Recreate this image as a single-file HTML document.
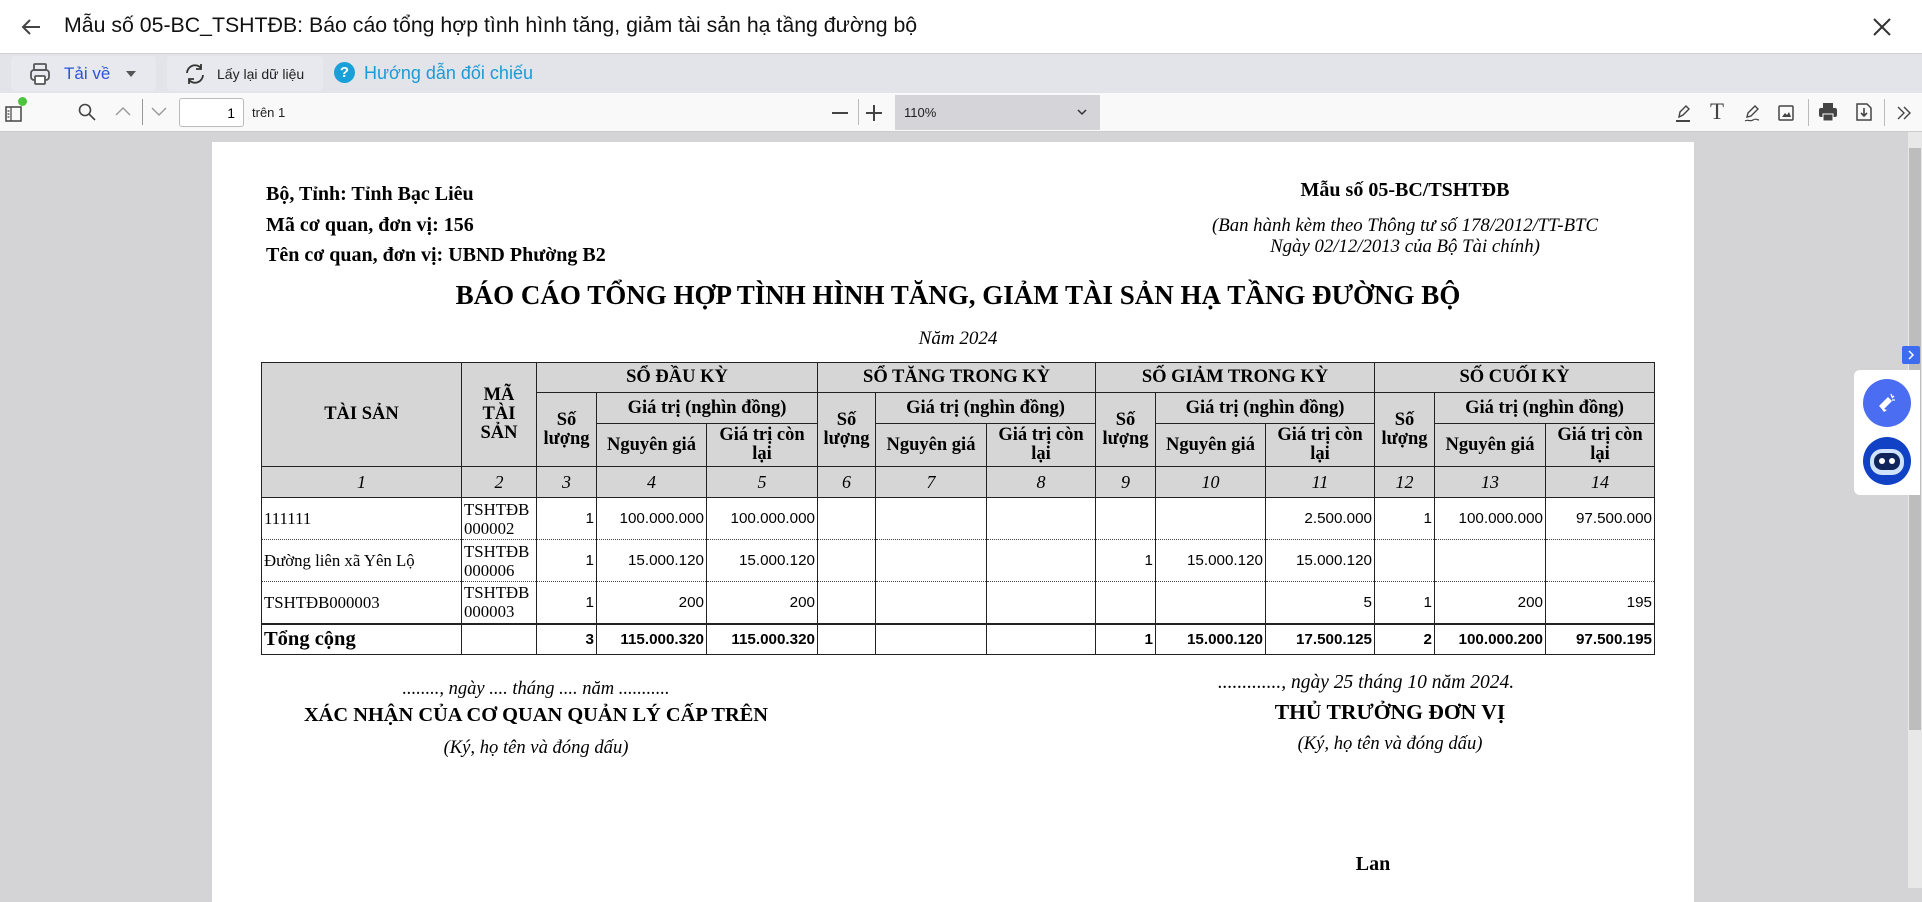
<!DOCTYPE html>
<html><head><meta charset="utf-8">
<style>
*{margin:0;padding:0;box-sizing:border-box}
body{width:1922px;height:888px;overflow:hidden;background:#d4d4d7;font-family:"Liberation Sans",sans-serif;position:relative}
.abs{position:absolute}
#top{left:0;top:0;width:1922px;height:54px;background:#fff;border-bottom:1px solid #d0d0d0}
#top .t{left:64px;top:13px;font-size:21.3px;color:#111}
#bar2{left:0;top:54px;width:1922px;height:39px;background:#e2e4ea}
.btn{background:#e8e9ee;height:35px;top:2px;border-radius:4px}
#pdfbar{left:0;top:93px;width:1922px;height:39px;background:#f9f9fa;border-bottom:1px solid #ccc}
#page{left:212px;top:142px;width:1482px;height:760px;background:#fff}
.serif{font-family:"Liberation Serif",serif;color:#000}
table{border-collapse:collapse;position:absolute;left:261px;top:362px;table-layout:fixed}
td{border:1px solid #222;font-family:"Liberation Serif",serif;font-size:18.5px;text-align:center;line-height:19px;padding:0 2px;overflow:hidden}
.h td{background:#d6d6d6;font-weight:bold}
.idx td{background:#d6d6d6;font-style:italic;height:31px;font-size:18px}
.d td{height:42px;font-family:"Liberation Sans",sans-serif;font-size:15.2px;text-align:right;border-top:1px dotted #444;border-bottom:1px dotted #444}
.d td.l{text-align:left;font-family:"Liberation Serif",serif;font-size:16.8px}
.tot td{height:31px;font-family:"Liberation Sans",sans-serif;font-weight:bold;font-size:15.2px;text-align:right;border-top:2px solid #222}
</style></head><body>
<div id="top" class="abs">
 <svg class="abs" style="left:20px;top:17px" width="22" height="20" viewBox="0 0 22 20"><path d="M20 10H3M10 3L3 10l7 7" stroke="#444" stroke-width="2" fill="none"/></svg>
 <div class="abs t">Mẫu số 05-BC_TSHTĐB: Báo cáo tổng hợp tình hình tăng, giảm tài sản hạ tầng đường bộ</div>
 <svg class="abs" style="left:1872px;top:17px" width="20" height="20" viewBox="0 0 20 20"><path d="M2 2L18 18M18 2L2 18" stroke="#333" stroke-width="2"/></svg>
</div>
<div id="bar2" class="abs">
 <div class="abs btn" style="left:11px;width:145px"></div>
 <div class="abs btn" style="left:167px;width:156px"></div>
 <svg class="abs" style="left:29px;top:8px" width="22" height="24" viewBox="0 0 22 24"><rect x="5" y="2" width="12" height="6" rx="1" fill="none" stroke="#555" stroke-width="1.8"/><rect x="2" y="8" width="18" height="10" rx="3" fill="none" stroke="#555" stroke-width="1.8"/><rect x="6" y="14" width="10" height="8" rx="1" fill="#fff" stroke="#555" stroke-width="1.8"/></svg>
 <div class="abs" style="left:64px;top:10px;font-size:17px;color:#2a55d8">Tải về</div>
 <div class="abs" style="left:126px;top:17px;border-left:5px solid transparent;border-right:5px solid transparent;border-top:6px solid #555"></div>
 <svg class="abs" style="left:183px;top:8px" width="24" height="24" viewBox="0 0 24 24"><path d="M4 11a8 8 0 0 1 14-5M20 13a8 8 0 0 1-14 5" stroke="#333" stroke-width="1.8" fill="none"/><path d="M18 2v5h-5M6 22v-5h5" stroke="#333" stroke-width="1.8" fill="none"/></svg>
 <div class="abs" style="left:217px;top:12px;font-size:14px;color:#222">Lấy lại dữ liệu</div>
 <div class="abs" style="left:334px;top:8px;width:21px;height:21px;border-radius:50%;background:#1aa0d8;color:#fff;font-weight:bold;font-size:15px;text-align:center;line-height:21px">?</div>
 <div class="abs" style="left:364px;top:9px;font-size:18px;color:#1a9bd7">Hướng dẫn đối chiếu</div>
</div>
<div id="pdfbar" class="abs">
 <svg class="abs" style="left:5px;top:12px" width="18" height="18" viewBox="0 0 18 18"><rect x="1" y="2" width="15" height="14" fill="none" stroke="#444" stroke-width="1.5"/><path d="M6 2v14M2.5 6h2M2.5 9h2M2.5 12h2" stroke="#444" stroke-width="1.2"/></svg>
 <div class="abs" style="left:18px;top:4px;width:9px;height:9px;border-radius:50%;background:#4cc43e"></div>
 <svg class="abs" style="left:78px;top:10px" width="18" height="18" viewBox="0 0 18 18"><circle cx="7" cy="7" r="5.5" fill="none" stroke="#444" stroke-width="1.6"/><path d="M11 11l6 6" stroke="#444" stroke-width="1.6"/></svg>
 <svg class="abs" style="left:115px;top:13px" width="16" height="10" viewBox="0 0 16 10"><path d="M1 9l7-7 7 7" stroke="#999" stroke-width="1.4" fill="none"/></svg>
 <div class="abs" style="left:142px;top:6px;width:1px;height:26px;background:#999"></div>
 <svg class="abs" style="left:151px;top:14px" width="16" height="10" viewBox="0 0 16 10"><path d="M1 1l7 7 7-7" stroke="#999" stroke-width="1.4" fill="none"/></svg>
 <div class="abs" style="left:179px;top:5px;width:65px;height:29px;background:#fff;border:1px solid #bbb;border-radius:3px;font-size:14px;text-align:right;padding:6px 8px 0 0">1</div>
 <div class="abs" style="left:252px;top:12px;font-size:13px;color:#222">trên 1</div>
 <div class="abs" style="left:832px;top:19px;width:16px;height:1.5px;background:#444"></div>
 <div class="abs" style="left:858px;top:6px;width:1px;height:26px;background:#bbb"></div>
 <div class="abs" style="left:866px;top:19px;width:16px;height:1.5px;background:#444"></div>
 <div class="abs" style="left:873px;top:12px;width:1.5px;height:16px;background:#444"></div>
 <div class="abs" style="left:895px;top:2px;width:205px;height:35px;background:#d5d5d9"></div>
 <div class="abs" style="left:904px;top:12px;font-size:13px;color:#222">110%</div>
 <svg class="abs" style="left:1077px;top:16px" width="10" height="8" viewBox="0 0 10 8"><path d="M1 1l4 4 4-4" stroke="#333" stroke-width="1.5" fill="none"/></svg>
 <svg class="abs" style="left:1673px;top:10px" width="20" height="20" viewBox="0 0 20 20"><path d="M6 14l1-5 6-6 3 3-6 6z" fill="none" stroke="#444" stroke-width="1.4"/><path d="M3 18h14" stroke="#444" stroke-width="2"/></svg>
 <div class="abs serif" style="left:1710px;top:6px;font-size:23px;color:#444">T</div>
 <svg class="abs" style="left:1742px;top:10px" width="20" height="20" viewBox="0 0 20 20"><path d="M5 14l1-4 7-7 3 3-7 7z" fill="none" stroke="#444" stroke-width="1.4"/><path d="M3 18c3-2 5 1 8-1s4 0 6 0" stroke="#444" stroke-width="1.2" fill="none"/></svg>
 <svg class="abs" style="left:1777px;top:10px" width="18" height="20" viewBox="0 0 18 20"><rect x="2" y="3" width="14" height="14" rx="1" fill="none" stroke="#444" stroke-width="1.5"/><path d="M5 14l3-4 2 2 2-3 2 5z" fill="#444"/></svg>
 <div class="abs" style="left:1808px;top:6px;width:1px;height:27px;background:#bbb"></div>
 <svg class="abs" style="left:1818px;top:9px" width="20" height="20" viewBox="0 0 20 20"><rect x="5" y="1" width="10" height="5" fill="#444"/><rect x="1" y="6" width="18" height="9" rx="2" fill="#444"/><rect x="5" y="12" width="10" height="7" fill="#444" stroke="#fff" stroke-width="1"/></svg>
 <svg class="abs" style="left:1854px;top:9px" width="20" height="20" viewBox="0 0 20 20"><path d="M3 2h10l4 4v12H3z" fill="none" stroke="#444" stroke-width="1.5"/><path d="M10 6v8M7 11l3 3 3-3" stroke="#444" stroke-width="1.6" fill="none"/></svg>
 <div class="abs" style="left:1884px;top:6px;width:1px;height:27px;background:#bbb"></div>
 <svg class="abs" style="left:1896px;top:12px" width="16" height="16" viewBox="0 0 16 16"><path d="M2 2l6 6-6 6M8 2l6 6-6 6" stroke="#444" stroke-width="1.4" fill="none"/></svg>
</div>
<div class="abs" style="left:1908px;top:132px;width:14px;height:756px;background:#e8e8e8"></div>
<div class="abs" style="left:1909px;top:148px;width:12px;height:582px;background:#bdbdbd"></div>
<div id="page" class="abs"></div>
<div class="abs serif" style="left:266px;top:179px;font-size:20px;font-weight:bold;line-height:30.5px">Bộ, Tỉnh: Tỉnh Bạc Liêu<br>Mã cơ quan, đơn vị: 156<br>Tên cơ quan, đơn vị: UBND Phường B2</div>
<div class="abs serif" style="left:1205px;width:400px;top:179px;font-size:20px;font-weight:bold;text-align:center">Mẫu số 05-BC/TSHTĐB</div>
<div class="abs serif" style="left:1155px;width:500px;top:215px;font-size:18.8px;font-style:italic;text-align:center;line-height:21px">(Ban hành kèm theo Thông tư số 178/2012/TT-BTC<br>Ngày 02/12/2013 của Bộ Tài chính)</div>
<div class="abs serif" style="left:262px;width:1392px;top:280px;font-size:27px;font-weight:bold;text-align:center">BÁO CÁO TỔNG HỢP TÌNH HÌNH TĂNG, GIẢM TÀI SẢN HẠ TẦNG ĐƯỜNG BỘ</div>
<div class="abs serif" style="left:858px;width:200px;top:328px;font-size:19px;font-style:italic;text-align:center">Năm 2024</div>
<table>
<colgroup><col style="width:200px"><col style="width:75px"><col style="width:60px"><col style="width:110px"><col style="width:111px"><col style="width:58px"><col style="width:111px"><col style="width:109px"><col style="width:60px"><col style="width:110px"><col style="width:109px"><col style="width:60px"><col style="width:111px"><col style="width:109px"></colgroup>
<tr class="h" style="height:30px"><td rowspan="3">TÀI SẢN</td><td rowspan="3">MÃ<br>TÀI<br>SẢN</td><td colspan="3">SỔ ĐẦU KỲ</td><td colspan="3">SỔ TĂNG TRONG KỲ</td><td colspan="3">SỐ GIẢM TRONG KỲ</td><td colspan="3">SỐ CUỐI KỲ</td></tr>
<tr class="h" style="height:31px"><td rowspan="2">Số<br>lượng</td><td colspan="2">Giá trị (nghìn đồng)</td><td rowspan="2">Số<br>lượng</td><td colspan="2">Giá trị (nghìn đồng)</td><td rowspan="2">Số<br>lượng</td><td colspan="2">Giá trị (nghìn đồng)</td><td rowspan="2">Số<br>lượng</td><td colspan="2">Giá trị (nghìn đồng)</td></tr>
<tr class="h" style="height:43px"><td>Nguyên giá</td><td>Giá trị còn<br>lại</td><td>Nguyên giá</td><td>Giá trị còn<br>lại</td><td>Nguyên giá</td><td>Giá trị còn<br>lại</td><td>Nguyên giá</td><td>Giá trị còn<br>lại</td></tr>
<tr class="idx"><td>1</td><td>2</td><td>3</td><td>4</td><td>5</td><td>6</td><td>7</td><td>8</td><td>9</td><td>10</td><td>11</td><td>12</td><td>13</td><td>14</td></tr>
<tr class="d"><td class="l">111111</td><td class="l">TSHTĐB<br>000002</td><td>1</td><td>100.000.000</td><td>100.000.000</td><td></td><td></td><td></td><td></td><td></td><td>2.500.000</td><td>1</td><td>100.000.000</td><td>97.500.000</td></tr>
<tr class="d"><td class="l">Đường liên xã Yên Lộ</td><td class="l">TSHTĐB<br>000006</td><td>1</td><td>15.000.120</td><td>15.000.120</td><td></td><td></td><td></td><td>1</td><td>15.000.120</td><td>15.000.120</td><td></td><td></td><td></td></tr>
<tr class="d"><td class="l">TSHTĐB000003</td><td class="l">TSHTĐB<br>000003</td><td>1</td><td>200</td><td>200</td><td></td><td></td><td></td><td></td><td></td><td>5</td><td>1</td><td>200</td><td>195</td></tr>
<tr class="tot"><td style="text-align:left;font-family:'Liberation Serif',serif;font-size:20.5px">Tổng cộng</td><td></td><td>3</td><td>115.000.320</td><td>115.000.320</td><td></td><td></td><td></td><td>1</td><td>15.000.120</td><td>17.500.125</td><td>2</td><td>100.000.200</td><td>97.500.195</td></tr>
</table>
<div class="abs serif" style="left:236px;width:600px;top:679px;font-size:18.5px;font-style:italic;text-align:center">........, ngày .... tháng .... năm ...........</div>
<div class="abs serif" style="left:186px;width:700px;top:704px;font-size:20.4px;font-weight:bold;text-align:center">XÁC NHẬN CỦA CƠ QUAN QUẢN LÝ CẤP TRÊN</div>
<div class="abs serif" style="left:236px;width:600px;top:737px;font-size:18.6px;font-style:italic;text-align:center">(Ký, họ tên và đóng dấu)</div>
<div class="abs serif" style="left:1066px;width:600px;top:672px;font-size:19.5px;font-style:italic;text-align:center">............., ngày 25 tháng 10 năm 2024.</div>
<div class="abs serif" style="left:1090px;width:600px;top:700px;font-size:21.6px;font-weight:bold;text-align:center">THỦ TRƯỞNG ĐƠN VỊ</div>
<div class="abs serif" style="left:1090px;width:600px;top:733px;font-size:18.6px;font-style:italic;text-align:center">(Ký, họ tên và đóng dấu)</div>
<div class="abs serif" style="left:1273px;width:200px;top:853px;font-size:20px;font-weight:bold;text-align:center">Lan</div>
<div class="abs" style="left:1902px;top:346px;width:18px;height:18px;background:#3d6cf0;border-radius:2px"></div>
<svg class="abs" style="left:1906px;top:350px" width="10" height="10" viewBox="0 0 10 10"><path d="M3 1l4 4-4 4" stroke="#fff" stroke-width="1.5" fill="none"/></svg>
<div class="abs" style="left:1854px;top:370px;width:66px;height:125px;background:#fff;border-radius:6px 0 0 6px"></div>
<div class="abs" style="left:1863px;top:379px;width:48px;height:48px;border-radius:50%;background:#4a6df2"></div>
<svg class="abs" style="left:1875px;top:391px" width="24" height="24" viewBox="0 0 24 24"><path d="M4 15l9-9 4 4-9 9z" fill="#fff"/><path d="M6 17l3 4 3-2" fill="#fff"/><path d="M16 3l1 3M19 5l-2 2M20 9l-3 0" stroke="#fff" stroke-width="1.3"/></svg>
<div class="abs" style="left:1863px;top:437px;width:48px;height:48px;border-radius:50%;background:#1142c6"></div>
<div class="abs" style="left:1870px;top:449px;width:34px;height:26px;border-radius:12px;background:#cfe3ff"></div>
<div class="abs" style="left:1874px;top:453px;width:26px;height:17px;border-radius:8px;background:#10265a"></div>
<div class="abs" style="left:1879px;top:458px;width:6px;height:6px;border-radius:50%;background:#fff"></div>
<div class="abs" style="left:1889px;top:458px;width:6px;height:6px;border-radius:50%;background:#fff"></div>
</body></html>
